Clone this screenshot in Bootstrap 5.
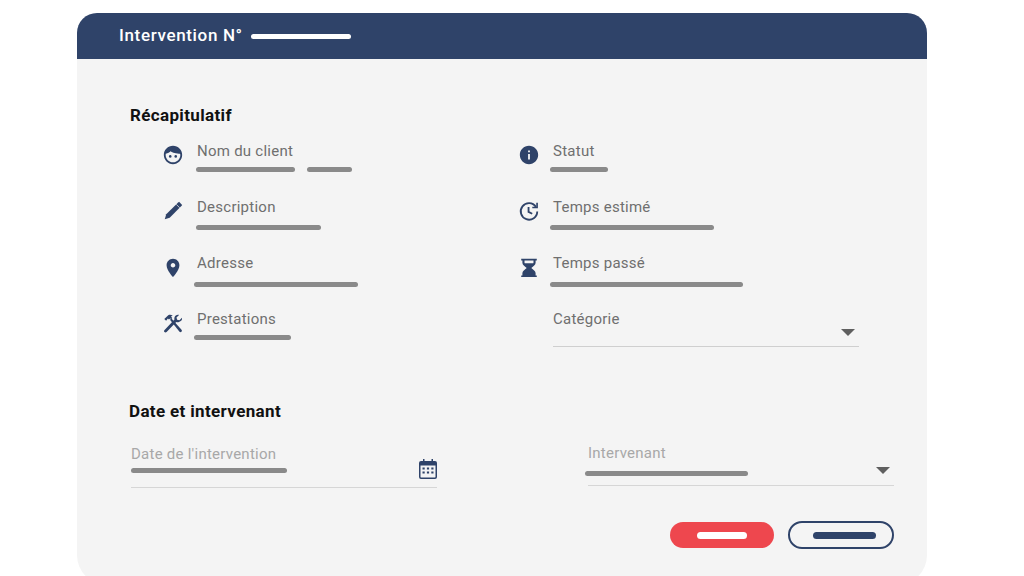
<!DOCTYPE html>
<html lang="fr">
<head>
    <meta charset="UTF-8">
    <title>Intervention</title>
    <link href="https://cdn.jsdelivr.net/npm/bootstrap@5.3.0/dist/css/bootstrap.min.css" rel="stylesheet">
    <style>
        html, body { height: 576px; overflow: hidden; }
        body { background: #fff; font-family: Roboto, "Liberation Sans", sans-serif; }
        .sheet { width: 850px; height: 572px; margin: 13px 0 0 77px; background: #f4f4f4; border-radius: 20px 20px 30px 30px; overflow: hidden; }
        .sheet-head { height: 46px; padding-left: 42px; background: #2f4369; color: #fff; font-size: 17px; font-weight: 500; letter-spacing: .65px; }
        .head-bar { width: 100px; height: 5px; margin-left: 8px; margin-top: 1px; border-radius: 3px; background: #fff; }
        .sheet-body { padding: 44px 33px 0 53px; }
        .sec-title { height: 24px; line-height: 24px; font-size: 17px; font-weight: 700; color: #111; letter-spacing: .35px; }
        .recap { display: grid; grid-template-columns: 356px 1fr; grid-auto-rows: 56px; margin: 14px 0 0 32px; }
        .field-ico { width: 35px; padding-top: 3px; flex: none; color: #2f4369; }
        .field-ico svg { display: block; width: 22px; height: 22px; }
        .lbl { height: 20px; line-height: 20px; font-size: 15px; color: #6f6f6f; letter-spacing: .25px; }
        .lbl-soft { color: #a8a8a8; }
        .ph { height: 5px; border-radius: 3px; background: #8a8a8a; }
        .ph-row { margin: 6px 0 0 -1px; }
        .ph-row-b { margin: 6px 0 0 -3px; }
        .row-2 { margin-top: 8px; }
        .row-3 { margin-top: 9px; }
        .select-line { width: 306px; height: 38px; border-bottom: 1px solid #cfcfcf; }
        .caret-dn { width: 0; height: 0; border-left: 7px solid transparent; border-right: 7px solid transparent; border-top: 7px solid #5f5f5f; }
        .date-row { margin-top: 34px; margin-left: -1px; }
        .date-fields { margin-top: 21px; margin-left: 1px; }
        .date-col { width: 306px; }
        .date-line { height: 44px; border-bottom: 1px solid #d6d6d6; }
        .date-line-b { height: 43px; margin-top: -1px; }
        .bar-b { margin-top: 8px; }
        .btn-pill { height: 26px; padding: 0; border-radius: 13px; border: 0; width: 104px; }
        .btn-red { background: #ee474e; }
        .btn-ghost { width: 106px; height: 28px; padding-left: 7px; border-radius: 14px; background: transparent; border: 2.5px solid #2f4369; }
        .btn-bar { height: 7px; border-radius: 4px; }
        .btn-row { margin-top: 33px; gap: 14px; }
    </style>
</head>
<body>
    <div class="sheet">
        <div class="sheet-head d-flex align-items-center">
            <span>Intervention N°</span>
            <div class="head-bar"></div>
        </div>

        <div class="sheet-body">
            <div class="sec-title">Récapitulatif</div>

            <div class="recap">
                <div class="d-flex">
                    <div class="field-ico">
                        <svg viewBox="0 0 24 24" fill="currentColor"><path d="M12 2C6.48 2 2 6.48 2 12s4.48 10 10 10 10-4.48 10-10S17.52 2 12 2zm0 18c-4.41 0-8-3.59-8-8 0-.5.05-1 .14-1.45C6.5 10.3 8.3 9.3 9.3 8c1.4 1.4 4.6 2.7 10.4 2.5.2.5.3 1 .3 1.5 0 4.41-3.59 8-8 8z"/><circle cx="9" cy="13.5" r="1.4"/><circle cx="15" cy="13.5" r="1.4"/></svg>
                    </div>
                    <div>
                        <div class="lbl">Nom du client</div>
                        <div class="d-flex ph-row column-gap-2">
                            <div class="ph" style="width:99px"></div>
                            <div class="ph ms-1" style="width:45px"></div>
                        </div>
                    </div>
                </div>
                <div class="d-flex">
                    <div class="field-ico">
                        <svg viewBox="0 0 24 24" fill="currentColor"><path d="M12 2C6.48 2 2 6.48 2 12s4.48 10 10 10 10-4.48 10-10S17.52 2 12 2zm1 15h-2v-6h2v6zm0-8h-2V7h2v2z"/></svg>
                    </div>
                    <div>
                        <div class="lbl">Statut</div>
                        <div class="ph ph-row-b" style="width:58px"></div>
                    </div>
                </div>

                <div class="d-flex">
                    <div class="field-ico">
                        <svg viewBox="0 0 24 24" fill="currentColor"><path d="M3 21l1.600-5.400 13-13 1-.6 3.400 3.400-.6 1-13 13z"/><path d="M15.500 4.700l3.800 3.800" stroke="#f4f4f4" stroke-width=".8"/></svg>
                    </div>
                    <div>
                        <div class="lbl">Description</div>
                        <div class="ph ph-row row-2" style="width:125px"></div>
                    </div>
                </div>
                <div class="d-flex">
                    <div class="field-ico">
                        <svg viewBox="0 0 24 24" fill="none" stroke="currentColor" stroke-width="2"><path d="M19.500 7.500A9 9 0 1 0 21 12.500"/><path d="M11.500 7.500v5.500l4 2"/><path d="M20.800 3v5.200h-5.200" stroke-width="1.800"/></svg>
                    </div>
                    <div>
                        <div class="lbl">Temps estimé</div>
                        <div class="ph ph-row-b row-2" style="width:164px"></div>
                    </div>
                </div>

                <div class="d-flex">
                    <div class="field-ico">
                        <svg viewBox="0 -1 24 24" fill="currentColor"><path d="M12 2C8.130 2 5 5.130 5 9c0 5.250 7 13 7 13s7-7.750 7-13c0-3.870-3.130-7-7-7zm0 9.500c-1.380 0-2.500-1.120-2.500-2.500s1.120-2.500 2.500-2.500 2.500 1.120 2.500 2.500-1.120 2.500-2.500 2.500z"/></svg>
                    </div>
                    <div>
                        <div class="lbl">Adresse</div>
                        <div class="ph ph-row-b row-3" style="width:164px"></div>
                    </div>
                </div>
                <div class="d-flex">
                    <div class="field-ico">
                        <svg viewBox="0 -1 24 24" fill="currentColor"><path d="M3.500 2h17v1.800h-1.300v2.700c0 2.300-3.300 3.900-4.700 5.500 1.400 1.600 4.700 3.200 4.700 5.500v2.700h1.300V22h-17v-1.800h1.300v-2.700c0-2.300 3.300-3.900 4.700-5.500C8.100 10.400 4.800 8.800 4.800 6.500V3.800H3.500zm3.600 1.800v2.400c0 .3.100.6.300.8h9.200c.2-.2.300-.5.300-.8V3.800z"/></svg>
                    </div>
                    <div>
                        <div class="lbl">Temps passé</div>
                        <div class="ph ph-row-b row-3" style="width:193px"></div>
                    </div>
                </div>

                <div class="d-flex">
                    <div class="field-ico">
                        <svg viewBox="0 -1 24 24" fill="currentColor"><path d="M2.500 6.500 6.800 2.500c1.600-.9 3.400-.6 4.900.5l-2 .9 1.500 1.700-1 1.100L8.800 6 7.600 7.200 6.400 6l-1.900 2.500z"/><path d="M8.700 7.400 10.300 6 21.300 18.400c.6.700.5 1.600-.1 2.200-.6.500-1.500.5-2.100-.1z"/><path d="M21.800 5.200 19 8l-2.500-.6L15.800 5l2.800-2.800c-2.100-.6-4.400.6-5 2.700-.2.800-.2 1.500 0 2.200L2.800 18.500c-.7.700-.7 1.700-.1 2.300.6.600 1.600.6 2.300-.1L15.500 10c1 .3 2.100.3 3-.1 2.200-.8 3.900-2.500 3.300-4.700z"/></svg>
                    </div>
                    <div>
                        <div class="lbl">Prestations</div>
                        <div class="ph ph-row-b" style="width:97px"></div>
                    </div>
                </div>
                <div class="d-flex">
                    <div class="field-ico"></div>
                    <div class="select-line">
                        <div class="lbl">Catégorie</div>
                        <div class="d-flex justify-content-end me-1">
                            <div class="caret-dn"></div>
                        </div>
                    </div>
                </div>
            </div>

            <div class="sec-title date-row">Date et intervenant</div>

            <div class="d-flex justify-content-between date-fields">
                <div class="date-col">
                    <div class="date-line d-flex justify-content-between">
                        <div>
                            <div class="lbl lbl-soft">Date de l'intervention</div>
                            <div class="ph mt-1" style="width:156px"></div>
                        </div>
                        <svg class="align-self-end mb-2" width="18" height="20" viewBox="0 0 18 20" fill="#2f4369"><path d="M4 0h1.500v2h7V0H14v2h2a2 2 0 0 1 2 2v14a2 2 0 0 1-2 2H2a2 2 0 0 1-2-2V4a2 2 0 0 1 2-2h2zM1.500 6.500V18c0 .3.200.5.500.5h14c.3 0 .5-.2.500-.5V6.500z"/><path d="M3.500 8.500h2.200v2H3.500zm4.400 0h2.200v2H7.900zm4.400 0h2.200v2h-2.200zm-8.800 4h2.200v2H3.500zm4.400 0h2.200v2H7.900zm4.400 0h2.200v2h-2.200z"/></svg>
                    </div>
                </div>
                <div class="date-col">
                    <div class="date-line date-line-b">
                        <div class="lbl lbl-soft">Intervenant</div>
                        <div class="d-flex justify-content-between">
                            <div class="ph ph-row-b bar-b" style="width:163px"></div>
                            <div class="caret-dn mt-1 me-1"></div>
                        </div>
                    </div>
                </div>
            </div>

            <div class="d-flex justify-content-end align-items-center btn-row">
                <button type="button" class="btn btn-pill btn-red d-flex align-items-center justify-content-center"><span class="btn-bar bg-white" style="width:50px"></span></button>
                <button type="button" class="btn btn-pill btn-ghost d-flex align-items-center justify-content-center"><span class="btn-bar" style="width:63px;background:#2f4369"></span></button>
            </div>
        </div>
    </div>
</body>
</html>
